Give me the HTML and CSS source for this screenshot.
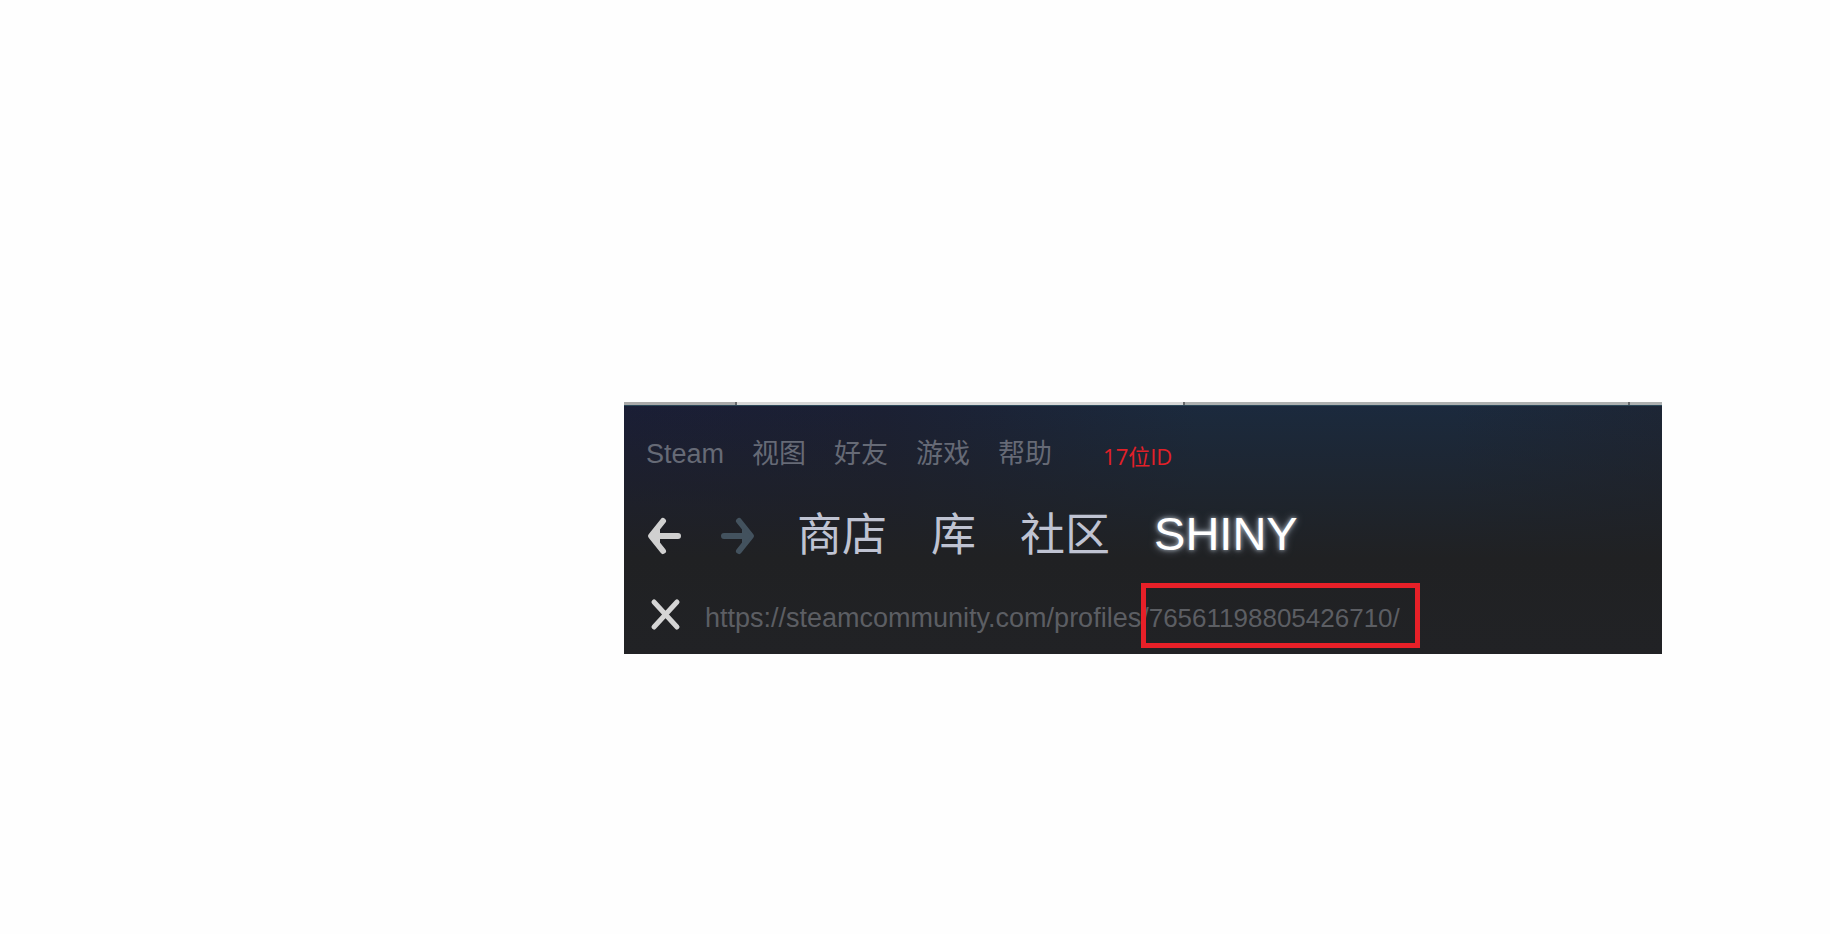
FILE: index.html
```html
<!DOCTYPE html>
<html lang="zh-CN">
<head>
<meta charset="utf-8">
<title>Steam</title>
<link rel="stylesheet" href="styles.css">
</head>
<body>
<main class="window">
  <div class="strip"><span class="strip-a"></span><span class="strip-b"></span><span class="strip-c"></span><span class="strip-d"></span></div>
  <div class="content">
    <div class="menu">
      <button type="button" class="menu-item">Steam</button>
      <button type="button" class="menu-item">视图</button>
      <button type="button" class="menu-item">好友</button>
      <button type="button" class="menu-item">游戏</button>
      <button type="button" class="menu-item">帮助</button>
      <span class="note">17位ID</span>
    </div>
    <nav class="nav">
      <div class="history">
        <button type="button" class="icon-button back" aria-label="后退">
          <svg width="36" height="40" viewBox="0 0 36 40"><path d="M17 5 5 20 17 35M6 20H32"/><path class="tip" d="M5 20 14 10V30Z"/></svg>
        </button>
        <button type="button" class="icon-button forward" aria-label="前进">
          <svg width="36" height="40" viewBox="0 0 36 40"><path d="M19 5 31 20 19 35M30 20H4"/><path class="tip" d="M31 20 22 10V30Z"/></svg>
        </button>
      </div>
      <a class="tab" href="#store">商店</a>
      <a class="tab" href="#library">库</a>
      <a class="tab" href="#community">社区</a>
      <a class="tab active" href="#profile">SHINY</a>
    </nav>
    <div class="address">
      <button type="button" class="icon-button stop" aria-label="停止">
        <svg width="36" height="36" viewBox="0 0 36 36"><path d="M8 5 31 30M31 5 8 30"/></svg>
      </button>
      <div class="url"><span>https://steamcommunity.com/profiles/</span><span class="profile-id">76561198805426710/</span></div>
    </div>
  </div>
</main>
</body>
</html>
```
FILE: styles.css
```css
* { box-sizing: border-box; }
body {
  margin: 0;
  min-height: 100vh;
  padding: 43vh 168px 0 34.1%;
  background: #fefefe;
  font-family: "Liberation Sans", "Noto Sans CJK SC", sans-serif;
}
button {
  border: 0;
  padding: 0;
  background: none;
  color: inherit;
  font: inherit;
}
.window {
  background:
    linear-gradient(180deg, rgba(32, 33, 35, 0) 0, #202123 62%, #212225 100%),
    linear-gradient(90deg, #1a1e36 0, #1b2034 25%, #1b2a3e 55%, #1b2a3e 80%, #1d2636 100%);
}
.strip {
  display: flex;
  height: 4px;
  border-bottom: 1px solid #2b4859;
}
.strip span { border-right: 2px solid #66686a; }
.strip-a { flex: 112; background: #a9a9a9; }
.strip-b { flex: 448; background: #d6d6d6; }
.strip-c { flex: 446; background: #adb0b0; }
.strip .strip-d { flex: 32; background: #adb0b0; border: 0; }
.content {
  display: flex;
  flex-direction: column;
  padding: 28px 0 15px 22px;
  white-space: nowrap;
}
.menu {
  display: flex;
  align-items: center;
  gap: 28px;
  height: 40px;
  color: #666a76;
  font-size: 27px;
  line-height: 40px;
}
.note {
  margin-left: 23px;
  padding-top: 4px;
  color: #e22028;
  font-family: "Open Sans", "Noto Sans CJK SC", sans-serif;
  font-size: 22px;
}
.nav {
  display: flex;
  align-items: center;
  gap: 44px;
  height: 96px;
  padding-top: 29px;
}
.history {
  display: flex;
  gap: 38px;
  margin-right: -3px;
}
.icon-button { display: flex; }
svg {
  fill: none;
  stroke: currentColor;
  stroke-linecap: round;
  stroke-linejoin: round;
  stroke-width: 6;
}
.tip {
  fill: currentColor;
  stroke: none;
}
.back { color: #d0d0d0; }
.forward { color: #43525e; }
.stop { color: #d5d5d5; }
.stop svg { stroke-width: 5; }
.tab {
  color: #bfc3d2;
  font-size: 45px;
  line-height: 56px;
  text-decoration: none;
}
.tab.active {
  color: #fff;
  font-size: 47px;
  line-height: 52px;
  padding-bottom: 4px;
  text-shadow: 0 0 4px #aeb7c2, 0 0 8px #79838f;
}
.address {
  display: flex;
  align-items: center;
  gap: 23px;
  padding-top: 27px;
}
.stop { margin-bottom: 6px; }
.url {
  display: flex;
  align-items: baseline;
  color: #5c5e63;
  font-size: 27px;
  line-height: 40px;
}
.profile-id {
  position: relative;
  font-size: 26px;
}
.profile-id::after {
  content: "";
  position: absolute;
  inset: -15px -20px -10px -8px;
  border: 5px solid #e72028;
}
```
